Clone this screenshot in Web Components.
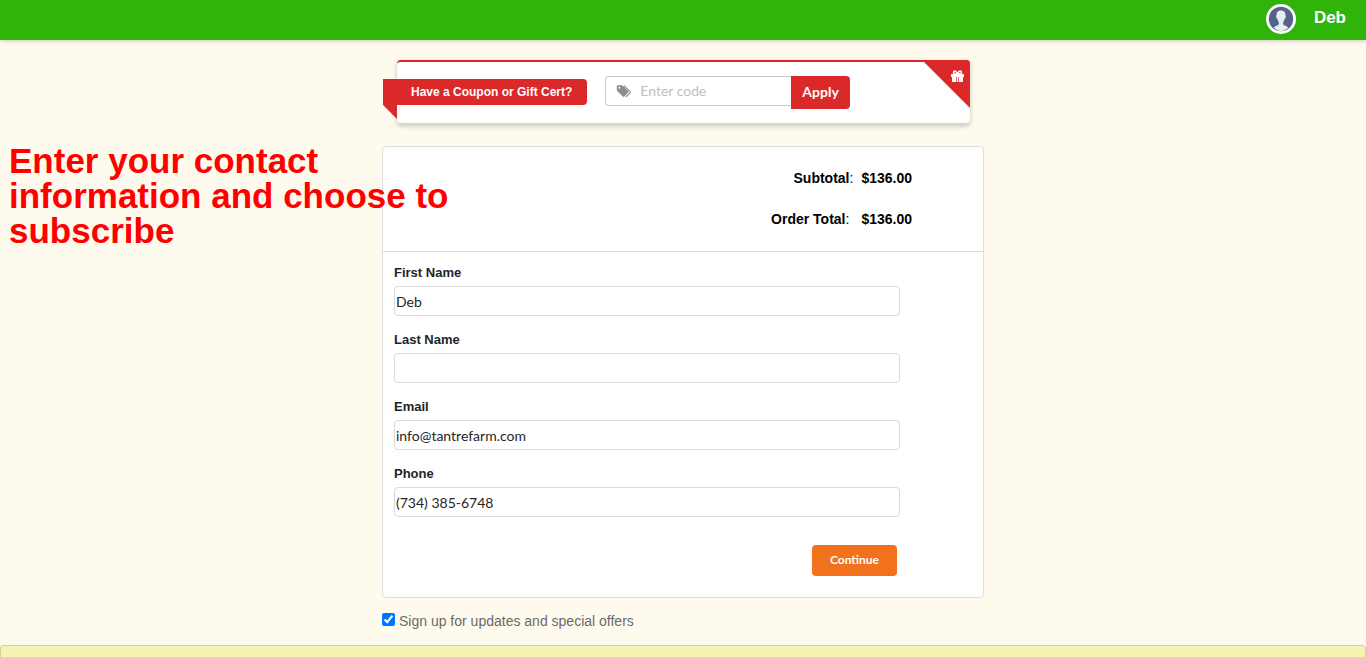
<!DOCTYPE html>
<html lang="en">
<head>
<meta charset="utf-8">
<meta name="viewport" content="width=device-width, initial-scale=1">
<title>Checkout</title>
<style>
  body {
    margin: 0;
    background: #fffaee;
    color: #212529;
    font-family: "Liberation Sans", Arial, sans-serif;
    font-size: 14px;
  }
</style>
</head>
<body>
<checkout-page></checkout-page>

<script>
const topBarHTML = `
  <style>
    :host {
      display: flex;
      justify-content: flex-end;
      align-items: center;
      box-sizing: border-box;
      height: 40px;
      padding: 0 20px 2px;
      background: #31b409;
      box-shadow: 0 1px 4px rgba(0, 0, 0, 0.2);
    }
    a {
      display: flex;
      align-items: center;
      gap: 18px;
      color: #fff;
      font-size: 17px;
      line-height: 20px;
      font-weight: bold;
      text-decoration: none;
    }
    svg { display: block; width: 30px; height: 30px; }
    span { padding-bottom: 2px; }
  </style>
  <a href="#account">
    <svg viewBox="0 0 30 30" aria-hidden="true">
      <circle cx="15" cy="15" r="15" fill="#fff"/>
      <circle cx="15" cy="15" r="12.2" fill="#56628a"/>
      <path fill="#e6edf3" d="M15 6.500c-3.400 0-4.700 2.200-4.400 5-.6.2-.5 1.400-.2 2.300.2.600.6.9 1 1 .3 1.500.7 2.400 1.400 3.200v2.300c-.6 1.500-3.600 1.700-5.100 3.300C9.600 25.800 12 27.200 15 27.200s5.400-1.400 7.300-3.600c-1.500-1.600-4.500-1.800-5.100-3.300V18c.7-.8 1.100-1.700 1.400-3.200.4-.1.8-.4 1-1 .3-.9.4-2.100-.2-2.300.3-2.800-1-5-4.400-5z"/>
    </svg>
    <span><slot></slot></span>
  </a>
`;

class TopBar extends HTMLElement {
  constructor() {
    super();
    this.attachShadow({ mode: "open" });
    this.shadowRoot.innerHTML = topBarHTML;
  }
}

customElements.define("top-bar", TopBar);

const couponCardHTML = `
  <style>
    :host {
      display: block;
      position: relative;
      box-sizing: border-box;
      height: 64px;
      border-top: 2px solid #d0282d;
      border-bottom: 1px solid #d4d4d5;
      border-radius: 4px;
      background: #fff;
      box-shadow: 0 2px 5px rgba(34, 36, 38, 0.25);
    }
    form {
      display: flex;
      align-items: flex-start;
      padding-top: 14px;
    }
    /* ribbon hangs over the left edge of the card */
    label {
      position: relative;
      box-sizing: border-box;
      margin: 3px 18px 0 -14px;
      padding: 0 15px 0 28px;
      border-radius: 0 4px 4px 0;
      background: #db2828;
      color: #fff;
      font-size: 12px;
      font-weight: bold;
      line-height: 26px;
      white-space: nowrap;
    }
    label::after {
      content: "";
      position: absolute;
      left: 0;
      top: 100%;
      width: 14px;
      height: 14px;
      background: #db2828;
      clip-path: polygon(0 0, 100% 0, 100% 100%);
    }
    .code {
      display: flex;
      align-items: center;
      box-sizing: border-box;
      width: 186px;
      height: 30px;
      padding-left: 10px;
      gap: 8px;
      border: 1px solid #c9c9ca;
      border-right: 0;
      border-radius: 4px 0 0 4px;
    }
    .code svg { flex: none; width: 16px; height: 14px; }
    input {
      flex: 1;
      min-width: 0;
      padding: 0;
      border: 0;
      outline: 0;
      background: none;
      font: 14px/18px Lato, sans-serif;
    }
    input::placeholder { color: #bfbfbf; opacity: 1; }
    button {
      height: 33px;
      padding: 0 11px 2px;
      border: 0;
      border-radius: 0 4px 4px 0;
      background: #db2828;
      color: #fff;
      font: bold 14px/18px Lato, sans-serif;
    }
    .corner {
      position: absolute;
      top: -2px;
      right: 0;
      width: 48px;
      height: 48px;
      border-top-right-radius: 4px;
      background: #db2828;
      clip-path: polygon(0 0, 100% 0, 100% 100%);
    }
    .corner svg {
      position: absolute;
      top: 10px;
      right: 6px;
      width: 13px;
      height: 12px;
    }
  </style>
  <form>
    <label for="code"><slot></slot></label>
    <div class="code">
      <svg viewBox="0 0 16 14" aria-hidden="true">
        <path fill="#8c8c8c" fill-rule="evenodd" d="M1.500 1.200h4c.5 0 1 .2 1.400.6l5.300 5.300c.5.500.5 1 0 1.500l-3.800 3.900c-.5.5-1 .5-1.500 0L1.500 7.200c-.4-.4-.7-.9-.7-1.400V2c0-.5.200-.8.700-.8zM3.300 2.700a1 1 0 1 0 0 2 1 1 0 0 0 0-2z"/>
        <path fill="none" stroke="#8c8c8c" stroke-width="1.100" d="M8 1.600l6.100 6.100c.4.400.4.700 0 1.100l-4.200 4.200"/>
      </svg>
      <input id="code" type="text" placeholder="Enter code">
    </div>
    <button type="button">Apply</button>
  </form>
  <div class="corner">
    <svg viewBox="0 0 13 12" aria-hidden="true">
      <path fill="#fff" d="M.6 4h11.800c.3 0 .6.300.6.600V7H0V4.600C0 4.300.3 4 .6 4zM1 6.500h4.300V12H2c-.6 0-1-.4-1-1zM7.700 6.500H12V11c0 .6-.4 1-1 1H7.700zM6 6h1v6H6z"/>
      <path fill="none" stroke="#fff" stroke-width="1.600" d="M6.500 4.300C5.800 2.200 4.900 1 3.800 1 2.200 1 2 4 4 4h5c2 0 1.800-3 .2-3-1.100 0-2 1.200-2.700 3.300z"/>
    </svg>
  </div>
`;

class CouponCard extends HTMLElement {
  constructor() {
    super();
    this.attachShadow({ mode: "open" });
    this.shadowRoot.innerHTML = couponCardHTML;
  }
}

customElements.define("coupon-card", CouponCard);

const orderTotalsHTML = `
  <style>
    :host {
      display: block;
      padding: 10px 71px 12px 0;
      border-bottom: 1px solid #dedede;
      color: #000;
    }
    table { margin-left: auto; border-collapse: collapse; }
    th, td {
      height: 41px;
      padding: 0;
      font-size: 14px;
      line-height: 16px;
      text-align: right;
    }
    th { font-weight: normal; padding-right: 12px; }
    tr:first-child th { padding-right: 8px; }
    td { font-weight: bold; }
  </style>
  <table><tbody></tbody></table>
`;

class OrderTotals extends HTMLElement {
  constructor() {
    super();
    this.attachShadow({ mode: "open" });
    this.shadowRoot.innerHTML = orderTotalsHTML;
  }

  connectedCallback() {
    this.render([
      ["Subtotal", this.getAttribute("subtotal")],
      ["Order Total", this.getAttribute("total")],
    ]);
  }

  render(rows) {
    const tableBody = this.shadowRoot.querySelector("tbody");
    tableBody.innerHTML = "";
    rows.forEach(([name, amount]) => {
      const tr = document.createElement("tr");
      const th = document.createElement("th");
      const strong = document.createElement("strong");
      const td = document.createElement("td");
      th.scope = "row";
      strong.textContent = name;
      th.append(strong, ":");
      td.textContent = amount;
      tr.append(th, td);
      tableBody.appendChild(tr);
    });
  }
}

customElements.define("order-totals", OrderTotals);

const textFieldHTML = `
  <style>
    :host { display: block; }
    label {
      display: block;
      margin-bottom: 5px;
      font-size: 13px;
      font-weight: bold;
      line-height: 16px;
    }
    input {
      display: block;
      box-sizing: border-box;
      width: 100%;
      height: 30px;
      padding: 0 1px;
      border: 1px solid #dadada;
      border-radius: 4px;
      background: #fff;
      color: #262626;
      font: 14px/18px Lato, sans-serif;
    }
  </style>
  <label for="field"></label>
  <input id="field">
`;

class TextField extends HTMLElement {
  constructor() {
    super();
    this.attachShadow({ mode: "open" });
    this.shadowRoot.innerHTML = textFieldHTML;
  }

  connectedCallback() {
    const input = this.shadowRoot.querySelector("input");
    this.shadowRoot.querySelector("label").textContent = this.getAttribute("label");
    input.type = this.getAttribute("type") || "text";
    input.value = this.getAttribute("value") || "";
  }
}

customElements.define("text-field", TextField);

const contactFormHTML = `
  <style>
    :host { display: block; padding: 13px 83px 21px 11px; }
    form { display: flex; flex-direction: column; gap: 16px; }
    button {
      align-self: flex-end;
      height: 31px;
      margin: 12px 3px 0 0;
      padding: 0 18px 2px;
      border: 0;
      border-radius: 4px;
      background: #f2711c;
      color: #fff;
      font: bold 12px/16px Lato, sans-serif;
    }
  </style>
  <form>
    <text-field label="First Name" value="Deb"></text-field>
    <text-field label="Last Name"></text-field>
    <text-field label="Email" type="email" value="info@tantrefarm.com"></text-field>
    <text-field label="Phone" type="tel" value="(734) 385-6748"></text-field>
    <button type="button">Continue</button>
  </form>
`;

class ContactForm extends HTMLElement {
  constructor() {
    super();
    this.attachShadow({ mode: "open" });
    this.shadowRoot.innerHTML = contactFormHTML;
  }
}

customElements.define("contact-form", ContactForm);

const signupCheckHTML = `
  <style>
    :host { display: block; color: #6a6a6a; }
    label { display: flex; align-items: flex-start; gap: 4px; line-height: 16px; }
    input { width: 13px; height: 13px; margin: 0; }
  </style>
  <label><input type="checkbox" checked><slot></slot></label>
`;

class SignupCheck extends HTMLElement {
  constructor() {
    super();
    this.attachShadow({ mode: "open" });
    this.shadowRoot.innerHTML = signupCheckHTML;
  }
}

customElements.define("signup-check", SignupCheck);

const checkoutPageHTML = `
  <style>
    :host {
      display: flex;
      flex-direction: column;
      min-height: 100vh;
    }
    main {
      position: relative;
      padding: 20px 16px 16px;
    }
    .column { max-width: 602px; margin: 0 auto; }
    coupon-card { margin: 0 14px 22px 15px; }
    .panel {
      border: 1px solid #dedede;
      border-radius: 4px;
      background: #fff;
    }
    signup-check { margin-top: 15px; }
    /* instruction laid over the page */
    h1 {
      position: absolute;
      top: 103px;
      left: 9px;
      width: 450px;
      margin: 0;
      color: #f00;
      font-size: 35px;
      line-height: 35px;
    }
    footer {
      flex: 1;
      border: 1px solid #d3d09c;
      border-bottom: 0;
      border-radius: 4px 4px 0 0;
      background: #f7f3b2;
    }
  </style>
  <top-bar>Deb</top-bar>
  <main>
    <div class="column">
      <coupon-card>Have a Coupon or Gift Cert?</coupon-card>
      <div class="panel">
        <order-totals subtotal="$136.00" total="$136.00"></order-totals>
        <contact-form></contact-form>
      </div>
      <signup-check>Sign up for updates and special offers</signup-check>
    </div>
    <h1>Enter your contact information and choose to subscribe</h1>
  </main>
  <footer></footer>
`;

class CheckoutPage extends HTMLElement {
  constructor() {
    super();
    this.attachShadow({ mode: "open" });
    this.shadowRoot.innerHTML = checkoutPageHTML;
  }
}

customElements.define("checkout-page", CheckoutPage);
</script>
</body>
</html>
